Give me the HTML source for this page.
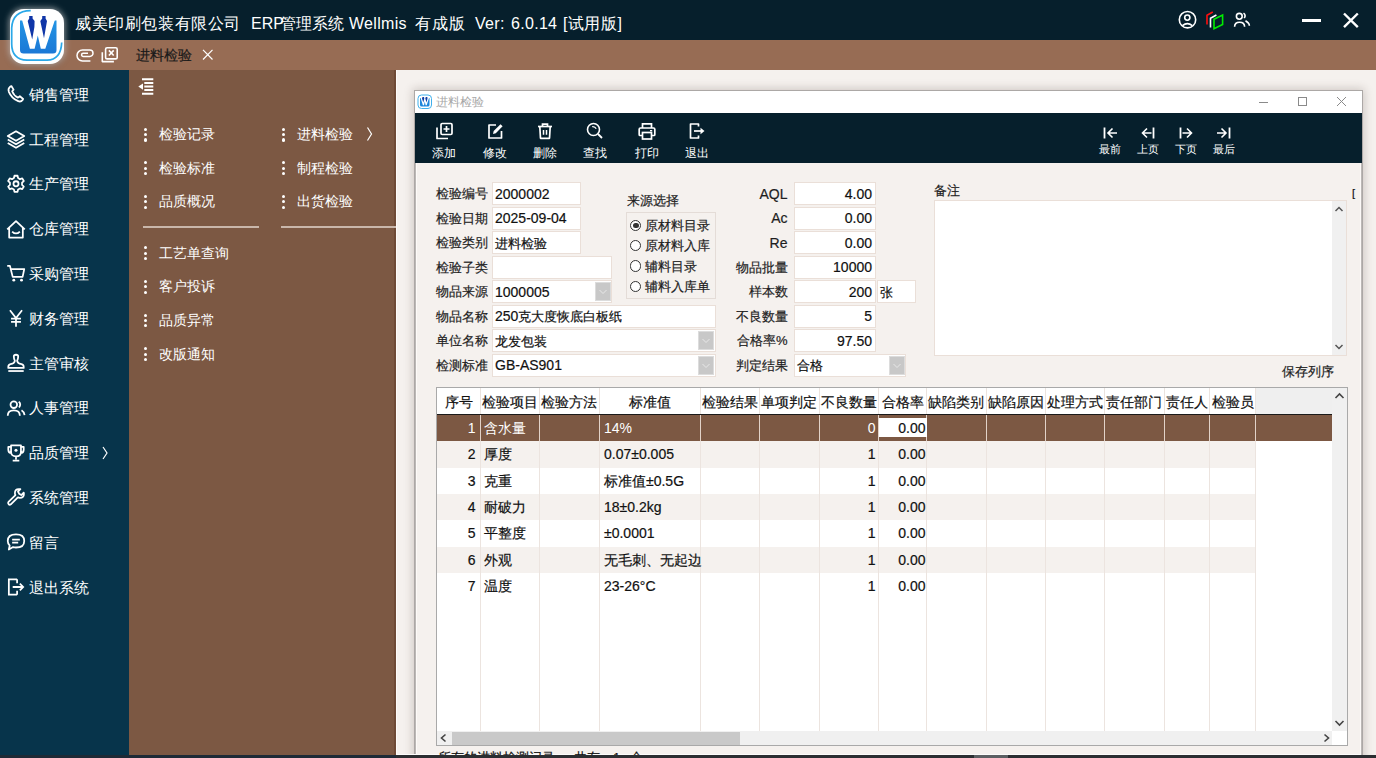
<!DOCTYPE html>
<html><head><meta charset="utf-8">
<style>
*{box-sizing:border-box;margin:0;padding:0}
html,body{width:1376px;height:758px;overflow:hidden;background:#f5f1ee;font-family:"Liberation Sans",sans-serif;position:relative}
.a{position:absolute}
.t{position:absolute;white-space:nowrap}
.d{-webkit-text-stroke:0.2px currentColor}
svg{position:absolute;overflow:visible}
</style></head><body>

<div class="a" style="left:0px;top:0px;width:1376px;height:40px;background:#061f2c"></div>
<div class="a" style="left:0px;top:40px;width:1376px;height:30px;background:#976c54"></div>
<div class="t" style="left:75px;top:13.30px;height:22px;line-height:22px;font-size:16px;color:#ffffff;letter-spacing:0.6px">威美印刷包装有限公司</div>
<div class="t" style="left:251px;top:13.30px;height:22px;line-height:22px;font-size:16px;color:#ffffff;letter-spacing:0px">ERP</div>
<div class="t" style="left:280px;top:13.30px;height:22px;line-height:22px;font-size:16px;color:#ffffff;letter-spacing:0px">管理系统</div>
<div class="t" style="left:349px;top:13.30px;height:22px;line-height:22px;font-size:16px;color:#ffffff;letter-spacing:0.3px">Wellmis</div>
<div class="t" style="left:415px;top:13.30px;height:22px;line-height:22px;font-size:16px;color:#ffffff;letter-spacing:0.75px">有成版</div>
<div class="t" style="left:475px;top:13.30px;height:22px;line-height:22px;font-size:16px;color:#ffffff;letter-spacing:0.3px">Ver:</div>
<div class="t" style="left:511px;top:13.30px;height:22px;line-height:22px;font-size:16px;color:#ffffff;letter-spacing:0.3px">6.0.14</div>
<div class="t" style="left:563px;top:13.30px;height:22px;line-height:22px;font-size:16px;color:#ffffff;letter-spacing:0.5px">[试用版]</div>
<svg style="left:1176px;top:8px;" width="24" height="24" viewBox="0 0 24 24"><circle cx="11.5" cy="11.7" r="8.2" fill="none" stroke="#fff" stroke-width="1.6"/><circle cx="11.3" cy="9.6" r="2.6" fill="none" stroke="#fff" stroke-width="1.6"/><path d="M6.5 17.6 Q11.3 13.6 16.3 17.6" fill="none" stroke="#fff" stroke-width="1.6"/></svg>
<svg style="left:1204px;top:8px;" width="24" height="24" viewBox="0 0 24 24"><path d="M3 16.5 V7.3 L8.8 4" fill="none" stroke="#ff1010" stroke-width="1.6"/><path d="M6.5 19.5 V10.2 L12.4 7" fill="none" stroke="#fff" stroke-width="1.6"/><path d="M10 20.6 V11.3 L18.6 7 V16.4 Z" fill="none" stroke="#00ee00" stroke-width="1.6"/></svg>
<svg style="left:1232px;top:8px;" width="24" height="24" viewBox="0 0 24 24"><circle cx="7.3" cy="8.3" r="2.9" fill="none" stroke="#fff" stroke-width="1.6"/><path d="M2.6 18.8 Q2.6 14.2 7.6 14.2 Q12.6 14.2 12.6 18.8" fill="none" stroke="#fff" stroke-width="1.6"/><path d="M11.5 5.2 Q14.2 7 12.3 10.2" fill="none" stroke="#fff" stroke-width="1.6"/><path d="M13.5 12.8 Q17.2 15 17.4 17.8" fill="none" stroke="#fff" stroke-width="1.6"/></svg>
<div class="a" style="left:1302px;top:19px;width:19px;height:2.5px;background:#fff"></div>
<svg style="left:1340px;top:10px;" width="22" height="22" viewBox="0 0 22 22"><path d="M4 3.5 L17.8 17.2 M17.8 3.5 L4 17.2" stroke="#fff" stroke-width="2.4"/></svg>
<svg style="left:74.8px;top:46.8px;" width="24" height="18" viewBox="0 0 24 18"><path d="M15.4 14 H7.5 A5.5 5.5 0 0 1 7.5 3 H14.8 A3.2 3.2 0 0 1 14.8 9.4 H8.2 A1.6 1.6 0 0 1 8.2 6.2 H13" fill="none" stroke="#fff" stroke-width="1.5"/></svg>
<svg style="left:100px;top:45px;" width="22" height="20" viewBox="0 0 22 20"><rect x="5.6" y="2.7" width="11.6" height="11.2" rx="1.5" fill="none" stroke="#fff" stroke-width="1.6"/><path d="M2.3 7.2 V16.6 H13.9" fill="none" stroke="#fff" stroke-width="1.6" stroke-linejoin="round"/><path d="M8.9 5.4 L13.7 10.5 M13.7 5.4 L8.9 10.5" stroke="#fff" stroke-width="1.6"/></svg>
<div class="t d" style="left:136px;top:44.60px;height:20px;line-height:20px;font-size:14px;color:#1a1a1a;">进料检验</div>
<svg style="left:201px;top:48px;" width="14" height="14" viewBox="0 0 14 14"><path d="M2 1.8 L11.5 11.5 M11.5 1.8 L2 11.5" stroke="#fff" stroke-width="1.2"/></svg>
<div class="a" style="left:10px;top:9px;width:54px;height:55px;border-radius:14px;background:#fff;box-shadow:0 0 6px 1px rgba(255,255,255,0.55),0 2px 6px rgba(0,0,0,0.35)"></div>
<svg style="left:0px;top:0px;" width="80" height="80" viewBox="0 0 80 80"><defs><linearGradient id="lg" x1="0" y1="0" x2="0" y2="1"><stop offset="0" stop-color="#2294e4"/><stop offset="1" stop-color="#1b78d6"/></linearGradient></defs>
<path d="M30.7 10.6 Q12.5 10.8 11.7 28 V44 Q11.8 59.6 27 60.2 H47 Q61 59.8 61.7 42.5" fill="none" stroke="#2aa8e8" stroke-width="1.7"/>
<path d="M20 20.4 H56.5 V50 Q56.5 53.5 53 53.5 H23.5 Q20 53.5 20 50 Z" fill="url(#lg)"/>
<polygon points="22,19.8 55,19.8 45.3,48.7 40.8,48.7 37.8,35.5 34.6,48.7 29.9,48.7" fill="#fff"/>
<polygon points="29.2,16 32.6,16 32.6,18.4 34.6,21 34.4,27 32.2,39.5 27.7,21 29.2,18.4" fill="#1036a8"/>
<polygon points="42.2,16 45.6,16 45.6,18.4 47,21 44,38.3 40.3,21 42.2,18.4" fill="#1036a8"/></svg>
<div class="a" style="left:0px;top:70px;width:129px;height:688px;background:#07344b"></div>
<div class="t" style="left:29px;top:83.80px;height:21px;line-height:21px;font-size:15px;color:#ffffff;">销售管理</div>
<svg style="left:7px;top:85px;" width="18" height="18" viewBox="0 0 18 18"><g transform="translate(9 9) scale(1.1) translate(-9 -9)"><path d="M3.5 2.5 Q1.5 4 2.5 7 Q5 13 11 15.5 Q13.5 16.5 15 14.5 L15.5 13.5 L12.5 11 L10.8 12.3 Q7 10.5 5.5 6.5 L6.8 5 L4.8 1.8 Z" fill="none" stroke="#fff" stroke-width="1.6" stroke-linejoin="round"/></g></svg>
<div class="t" style="left:29px;top:128.60px;height:21px;line-height:21px;font-size:15px;color:#ffffff;">工程管理</div>
<svg style="left:7px;top:130px;" width="18" height="18" viewBox="0 0 18 18"><g transform="translate(9 9) scale(1.1) translate(-9 -9)"><path d="M9 2 L16.5 6.3 L9 10.6 L1.5 6.3 Z" fill="none" stroke="#fff" stroke-width="1.6" stroke-linejoin="round"/><path d="M1.5 9.5 L9 13.8 L16.5 9.5 M1.5 12.7 L9 17 L16.5 12.7" fill="none" stroke="#fff" stroke-width="1.6" stroke-linejoin="round"/></g></svg>
<div class="t" style="left:29px;top:173.40px;height:21px;line-height:21px;font-size:15px;color:#ffffff;">生产管理</div>
<svg style="left:7px;top:175px;" width="18" height="18" viewBox="0 0 18 18"><g transform="translate(9 9) scale(1.1) translate(-9 -9)"><path d="M7.6 1.5 H10.4 L10.9 3.6 L12.6 4.6 L14.7 3.9 L16.1 6.3 L14.5 7.8 V9.8 L16.1 11.3 L14.7 13.7 L12.6 13 L10.9 14 L10.4 16.1 H7.6 L7.1 14 L5.4 13 L3.3 13.7 L1.9 11.3 L3.5 9.8 V7.8 L1.9 6.3 L3.3 3.9 L5.4 4.6 L7.1 3.6 Z" fill="none" stroke="#fff" stroke-width="1.6" stroke-linejoin="round"/><circle cx="9" cy="8.8" r="2.3" fill="none" stroke="#fff" stroke-width="1.6"/></g></svg>
<div class="t" style="left:29px;top:218.20px;height:21px;line-height:21px;font-size:15px;color:#ffffff;">仓库管理</div>
<svg style="left:7px;top:220px;" width="18" height="18" viewBox="0 0 18 18"><g transform="translate(9 9) scale(1.1) translate(-9 -9)"><path d="M1 9.3 L9 1.8 L17 9.3 M2.8 7.8 V16.8 H15.2 V7.8" fill="none" stroke="#fff" stroke-width="1.6" stroke-linejoin="round"/><path d="M5.5 11.3 Q9 14.8 12.5 11.3" fill="none" stroke="#fff" stroke-width="1.6"/></g></svg>
<div class="t" style="left:29px;top:263.00px;height:21px;line-height:21px;font-size:15px;color:#ffffff;">采购管理</div>
<svg style="left:7px;top:264px;" width="18" height="18" viewBox="0 0 18 18"><g transform="translate(9 9) scale(1.1) translate(-9 -9)"><path d="M1 2.5 H3.5 L6 12.5 H15 L16.5 5.5 H4.5" fill="none" stroke="#fff" stroke-width="1.6" stroke-linejoin="round"/><circle cx="7" cy="15.5" r="1.3" fill="#fff"/><circle cx="14" cy="15.5" r="1.3" fill="#fff"/></g></svg>
<div class="t" style="left:29px;top:307.80px;height:21px;line-height:21px;font-size:15px;color:#ffffff;">财务管理</div>
<svg style="left:7px;top:309px;" width="18" height="18" viewBox="0 0 18 18"><g transform="translate(9 9) scale(1.1) translate(-9 -9)"><path d="M3.5 2 L9 9 L14.5 2 M9 9 V17 M4.5 9.5 H13.5 M4.5 12.5 H13.5" fill="none" stroke="#fff" stroke-width="1.6"/></g></svg>
<div class="t" style="left:29px;top:352.60px;height:21px;line-height:21px;font-size:15px;color:#ffffff;">主管审核</div>
<svg style="left:7px;top:354px;" width="18" height="18" viewBox="0 0 18 18"><g transform="translate(9 9) scale(1.1) translate(-9 -9)"><path d="M7 3 Q7 1.5 9 1.5 Q11 1.5 11 3 Q11 5 10 7 Q10.5 9.5 14 10 Q16 10.5 16 12.5 V13.5 H2 V12.5 Q2 10.5 4 10 Q7.5 9.5 8 7 Q7 5 7 3 Z" fill="none" stroke="#fff" stroke-width="1.6" stroke-linejoin="round"/><path d="M2 16.3 H16" stroke="#fff" stroke-width="1.6"/></g></svg>
<div class="t" style="left:29px;top:397.40px;height:21px;line-height:21px;font-size:15px;color:#ffffff;">人事管理</div>
<svg style="left:7px;top:399px;" width="18" height="18" viewBox="0 0 18 18"><g transform="translate(9 9) scale(1.1) translate(-9 -9)"><circle cx="7" cy="6" r="3" fill="none" stroke="#fff" stroke-width="1.6"/><path d="M1.5 16 Q1.5 11.2 7 11.2 Q12.5 11.2 12.5 16" fill="none" stroke="#fff" stroke-width="1.6"/><path d="M11.5 3.2 Q14 5.5 11.8 8.5 M14 11 Q16.5 12.5 16.8 15.5" fill="none" stroke="#fff" stroke-width="1.6"/></g></svg>
<div class="t" style="left:29px;top:442.20px;height:21px;line-height:21px;font-size:15px;color:#ffffff;">品质管理</div>
<svg style="left:7px;top:444px;" width="18" height="18" viewBox="0 0 18 18"><g transform="translate(9 9) scale(1.1) translate(-9 -9)"><path d="M4.5 2 H13.5 V8 Q13.5 12 9 12 Q4.5 12 4.5 8 Z M4.5 3.5 H2 V6 Q2 9 5 9 M13.5 3.5 H16 V6 Q16 9 13 9 M9 12 V15 M6 16 H12" fill="none" stroke="#fff" stroke-width="1.6" stroke-linejoin="round"/><circle cx="9" cy="6.5" r="1.4" fill="#fff"/></g></svg>
<div class="t" style="left:29px;top:487.00px;height:21px;line-height:21px;font-size:15px;color:#ffffff;">系统管理</div>
<svg style="left:7px;top:488px;" width="18" height="18" viewBox="0 0 18 18"><g transform="translate(9 9) scale(1.1) translate(-9 -9)"><path d="M11.5 1.8 Q8 1.8 8 5.5 Q8 6.5 8.5 7.2 L2.2 13.5 Q1.3 14.5 2.3 15.6 Q3.3 16.5 4.3 15.6 L10.7 9.3 Q11.5 9.8 12.5 9.8 Q16.2 9.8 16.2 6.3 Q16.2 5.5 16 5 L13.8 7.2 L11.8 6 L10.8 4 L13 1.9 Q12.3 1.8 11.5 1.8 Z" fill="none" stroke="#fff" stroke-width="1.6" stroke-linejoin="round"/></g></svg>
<div class="t" style="left:29px;top:531.80px;height:21px;line-height:21px;font-size:15px;color:#ffffff;">留言</div>
<svg style="left:7px;top:533px;" width="18" height="18" viewBox="0 0 18 18"><g transform="translate(9 9) scale(1.1) translate(-9 -9)"><path d="M9 2 Q16.5 2 16.5 8 Q16.5 14 9 14 Q7.5 14 6.3 13.6 L2.5 15.8 L3.3 12.2 Q1.5 10.5 1.5 8 Q1.5 2 9 2 Z" fill="none" stroke="#fff" stroke-width="1.6" stroke-linejoin="round"/><path d="M5.5 6.8 H12.5 M5.5 9.5 H11" stroke="#fff" stroke-width="1.6"/></g></svg>
<div class="t" style="left:29px;top:576.60px;height:21px;line-height:21px;font-size:15px;color:#ffffff;">退出系统</div>
<svg style="left:7px;top:578px;" width="18" height="18" viewBox="0 0 18 18"><g transform="translate(9 9) scale(1.1) translate(-9 -9)"><path d="M10 2 H2.5 V16 H10" fill="none" stroke="#fff" stroke-width="1.6"/><path d="M10 2 V5.5 M10 12.5 V16 M6 9 H15.5 M12.5 6 L15.5 9 L12.5 12" fill="none" stroke="#fff" stroke-width="1.6"/></g></svg>
<svg style="left:100px;top:444.7px;" width="10" height="16" viewBox="0 0 10 16"><path d="M3 2 L7 8 L3 14" fill="none" stroke="#fff" stroke-width="1.2"/></svg>
<div class="a" style="left:129px;top:70px;width:267px;height:688px;background:#7c5843"></div>
<div class="a" style="left:394px;top:70px;width:1.5px;height:688px;background:#6e4a36"></div>
<div class="a" style="left:395.5px;top:70px;width:1.5px;height:688px;background:#fdfbfa"></div>
<svg style="left:136px;top:76.7px;" width="20" height="20" viewBox="0 0 20 20"><path d="M6 2.3 H17.3 M8.3 6 H17.3 M8.3 9.5 H17.3 M8.3 13 H17.3 M6 16.8 H17.3" stroke="#fff" stroke-width="2"/><path d="M7 6.5 L2.3 9.6 L7 12.7 Z" fill="#fff"/></svg>
<div class="a" style="left:143.9px;top:127.6px;width:3.2px;height:3.2px;border-radius:50%;background:#fff"></div><div class="a" style="left:143.9px;top:133.0px;width:3.2px;height:3.2px;border-radius:50%;background:#fff"></div><div class="a" style="left:143.9px;top:138.4px;width:3.2px;height:3.2px;border-radius:50%;background:#fff"></div>
<div class="t" style="left:159px;top:123.90px;height:20px;line-height:20px;font-size:14px;color:#ffffff;">检验记录</div>
<div class="a" style="left:143.9px;top:161.2px;width:3.2px;height:3.2px;border-radius:50%;background:#fff"></div><div class="a" style="left:143.9px;top:166.6px;width:3.2px;height:3.2px;border-radius:50%;background:#fff"></div><div class="a" style="left:143.9px;top:172.0px;width:3.2px;height:3.2px;border-radius:50%;background:#fff"></div>
<div class="t" style="left:159px;top:157.50px;height:20px;line-height:20px;font-size:14px;color:#ffffff;">检验标准</div>
<div class="a" style="left:143.9px;top:194.7px;width:3.2px;height:3.2px;border-radius:50%;background:#fff"></div><div class="a" style="left:143.9px;top:200.1px;width:3.2px;height:3.2px;border-radius:50%;background:#fff"></div><div class="a" style="left:143.9px;top:205.5px;width:3.2px;height:3.2px;border-radius:50%;background:#fff"></div>
<div class="t" style="left:159px;top:191.00px;height:20px;line-height:20px;font-size:14px;color:#ffffff;">品质概况</div>
<div class="a" style="left:143.9px;top:246.2px;width:3.2px;height:3.2px;border-radius:50%;background:#fff"></div><div class="a" style="left:143.9px;top:251.6px;width:3.2px;height:3.2px;border-radius:50%;background:#fff"></div><div class="a" style="left:143.9px;top:257.0px;width:3.2px;height:3.2px;border-radius:50%;background:#fff"></div>
<div class="t" style="left:159px;top:242.50px;height:20px;line-height:20px;font-size:14px;color:#ffffff;">工艺单查询</div>
<div class="a" style="left:143.9px;top:279.9px;width:3.2px;height:3.2px;border-radius:50%;background:#fff"></div><div class="a" style="left:143.9px;top:285.3px;width:3.2px;height:3.2px;border-radius:50%;background:#fff"></div><div class="a" style="left:143.9px;top:290.7px;width:3.2px;height:3.2px;border-radius:50%;background:#fff"></div>
<div class="t" style="left:159px;top:276.20px;height:20px;line-height:20px;font-size:14px;color:#ffffff;">客户投诉</div>
<div class="a" style="left:143.9px;top:313.5px;width:3.2px;height:3.2px;border-radius:50%;background:#fff"></div><div class="a" style="left:143.9px;top:318.9px;width:3.2px;height:3.2px;border-radius:50%;background:#fff"></div><div class="a" style="left:143.9px;top:324.3px;width:3.2px;height:3.2px;border-radius:50%;background:#fff"></div>
<div class="t" style="left:159px;top:309.80px;height:20px;line-height:20px;font-size:14px;color:#ffffff;">品质异常</div>
<div class="a" style="left:143.9px;top:347.2px;width:3.2px;height:3.2px;border-radius:50%;background:#fff"></div><div class="a" style="left:143.9px;top:352.6px;width:3.2px;height:3.2px;border-radius:50%;background:#fff"></div><div class="a" style="left:143.9px;top:358.0px;width:3.2px;height:3.2px;border-radius:50%;background:#fff"></div>
<div class="t" style="left:159px;top:343.50px;height:20px;line-height:20px;font-size:14px;color:#ffffff;">改版通知</div>
<div class="a" style="left:282.2px;top:127.6px;width:3.2px;height:3.2px;border-radius:50%;background:#fff"></div><div class="a" style="left:282.2px;top:133.0px;width:3.2px;height:3.2px;border-radius:50%;background:#fff"></div><div class="a" style="left:282.2px;top:138.4px;width:3.2px;height:3.2px;border-radius:50%;background:#fff"></div>
<div class="t" style="left:297.3px;top:123.90px;height:20px;line-height:20px;font-size:14px;color:#ffffff;">进料检验</div>
<div class="a" style="left:282.2px;top:161.2px;width:3.2px;height:3.2px;border-radius:50%;background:#fff"></div><div class="a" style="left:282.2px;top:166.6px;width:3.2px;height:3.2px;border-radius:50%;background:#fff"></div><div class="a" style="left:282.2px;top:172.0px;width:3.2px;height:3.2px;border-radius:50%;background:#fff"></div>
<div class="t" style="left:297.3px;top:157.50px;height:20px;line-height:20px;font-size:14px;color:#ffffff;">制程检验</div>
<div class="a" style="left:282.2px;top:194.7px;width:3.2px;height:3.2px;border-radius:50%;background:#fff"></div><div class="a" style="left:282.2px;top:200.1px;width:3.2px;height:3.2px;border-radius:50%;background:#fff"></div><div class="a" style="left:282.2px;top:205.5px;width:3.2px;height:3.2px;border-radius:50%;background:#fff"></div>
<div class="t" style="left:297.3px;top:191.00px;height:20px;line-height:20px;font-size:14px;color:#ffffff;">出货检验</div>
<svg style="left:364px;top:125px;" width="10" height="18" viewBox="0 0 10 18"><path d="M3.5 2.5 L7.5 9 L3.5 15.5" fill="none" stroke="#fff" stroke-width="1.2"/></svg>
<div class="a" style="left:143px;top:226px;width:116px;height:2px;background:#c9b6aa"></div>
<div class="a" style="left:281px;top:226px;width:115px;height:2px;background:#c9b6aa"></div>
<div class="a" style="left:414px;top:90px;width:949px;height:680px;background:#f5f1ee;border:1px solid #aca8a6;box-shadow:inset 1px 0 0 #bcb8b6,inset 2px 0 0 #fdfaf8,inset -1px 0 0 #bcb8b6,inset -2px 0 0 #fdfaf8,0 0 9px 1px rgba(60,40,30,0.22)"></div>
<div class="a" style="left:415px;top:91px;width:947px;height:22px;background:#fff"></div>
<svg style="left:417px;top:94px;" width="16" height="16" viewBox="0 0 16 16"><rect x="1" y="1" width="13.5" height="13.5" rx="3.5" fill="#fff" stroke="#3fb0ec" stroke-width="1"/><path d="M3 4 H12.5 V11 Q12.5 12.5 11 12.5 H4.5 Q3 12.5 3 11 Z" fill="#1d87dc"/><polygon points="3.6,4 12,4 9.7,11.3 8.6,11.3 7.8,7.5 7,11.3 5.9,11.3" fill="#fff"/><path d="M5.5 3 L7 3 L7.3 4.5 L6.3 8.5 L5 4.5 Z M8.8 3 L10.3 3 L10.5 4.5 L9.5 8.5 L8.3 4.5 Z" fill="#0e3ea6"/></svg>
<div class="t" style="left:436px;top:92.50px;height:18px;line-height:18px;font-size:12px;color:#a6a6a6;">进料检验</div>
<div class="a" style="left:1259px;top:102px;width:9px;height:1px;background:#8a8a8a"></div>
<div class="a" style="left:1298px;top:97px;width:9px;height:9px;border:1px solid #8a8a8a"></div>
<svg style="left:1336px;top:96px;" width="12" height="12" viewBox="0 0 12 12"><path d="M1 1 L10 10 M10 1 L1 10" stroke="#8a8a8a" stroke-width="1"/></svg>
<div class="a" style="left:415px;top:113px;width:947px;height:50px;background:#061f2c"></div>
<svg style="left:435px;top:122px;" width="18" height="18" viewBox="0 0 18 18"><rect x="6" y="1.5" width="11" height="11" rx="1.2" fill="none" stroke="#fff" stroke-width="1.7"/><path d="M11.5 4 V10 M8.5 7 H14.5" stroke="#fff" stroke-width="1.7"/><path d="M2 5.5 V16.5 H13" fill="none" stroke="#fff" stroke-width="1.7" stroke-linejoin="round"/></svg>
<div class="t" style="left:383.8px;top:143.50px;width:120px;height:18px;line-height:18px;font-size:12px;color:#fff;text-align:center;">添加</div>
<svg style="left:486px;top:122px;" width="18" height="18" viewBox="0 0 18 18"><path d="M10 3 H3 V16 H15.5 V9" fill="none" stroke="#fff" stroke-width="1.7" stroke-linejoin="round"/><path d="M7 12 L7.7 9 L14.5 2.2 L16.6 4.3 L9.8 11.2 Z" fill="#fff"/></svg>
<div class="t" style="left:435.0px;top:143.50px;width:120px;height:18px;line-height:18px;font-size:12px;color:#fff;text-align:center;">修改</div>
<svg style="left:536px;top:122px;" width="18" height="18" viewBox="0 0 18 18"><path d="M2 4.5 H16" stroke="#fff" stroke-width="1.7"/><path d="M6.5 4.5 V2.2 H11.5 V4.5" fill="none" stroke="#fff" stroke-width="1.7"/><path d="M3.8 4.5 L4.5 16.3 H13.5 L14.2 4.5" fill="none" stroke="#fff" stroke-width="1.7" stroke-linejoin="round"/><path d="M7.5 8 V12.8 M10.5 8 V12.8" stroke="#fff" stroke-width="1.5"/></svg>
<div class="t" style="left:485.0px;top:143.50px;width:120px;height:18px;line-height:18px;font-size:12px;color:#fff;text-align:center;">删除</div>
<svg style="left:586px;top:122px;" width="18" height="18" viewBox="0 0 18 18"><circle cx="7.5" cy="7.5" r="6" fill="none" stroke="#fff" stroke-width="1.6"/><path d="M12 12 L16 16" stroke="#fff" stroke-width="1.8"/><path d="M6.2 4.6 Q9 4.2 10.2 6.8" fill="none" stroke="#fff" stroke-width="1.2"/></svg>
<div class="t" style="left:535.3px;top:143.50px;width:120px;height:18px;line-height:18px;font-size:12px;color:#fff;text-align:center;">查找</div>
<svg style="left:638px;top:122px;" width="18" height="18" viewBox="0 0 18 18"><path d="M4.5 6 V1.8 H13.5 V6" fill="none" stroke="#fff" stroke-width="1.7"/><path d="M4 13.5 H2 Q1.2 13.5 1.2 12.5 V7.3 Q1.2 6 2.5 6 H15.5 Q16.8 6 16.8 7.3 V12.5 Q16.8 13.5 16 13.5 H14" fill="none" stroke="#fff" stroke-width="1.7"/><rect x="4.5" y="10.5" width="9" height="6.5" fill="none" stroke="#fff" stroke-width="1.7"/><rect x="12" y="8" width="2.2" height="1.3" fill="#fff"/></svg>
<div class="t" style="left:586.8px;top:143.50px;width:120px;height:18px;line-height:18px;font-size:12px;color:#fff;text-align:center;">打印</div>
<svg style="left:688px;top:122px;" width="18" height="18" viewBox="0 0 18 18"><path d="M10.5 4.5 V2 H2.5 V16 H10.5 V13.5" fill="none" stroke="#fff" stroke-width="1.7" stroke-linejoin="round"/><path d="M6 9 H15" stroke="#fff" stroke-width="1.7"/><path d="M12.5 5.8 L16.5 9 L12.5 12.2 Z" fill="#fff"/></svg>
<div class="t" style="left:637.3px;top:143.50px;width:120px;height:18px;line-height:18px;font-size:12px;color:#fff;text-align:center;">退出</div>
<svg style="left:1103px;top:126.5px;" width="14" height="12" viewBox="0 0 14 12"><path d="M1.5 0.5 V11.5" stroke="#fff" stroke-width="1.8"/><path d="M14 6 H5 M9.5 1.5 L5 6 L9.5 10.5" fill="none" stroke="#fff" stroke-width="1.6"/></svg>
<div class="t" style="left:1050.0px;top:140.50px;width:120px;height:17px;line-height:17px;font-size:11px;color:#fff;text-align:center;">最前</div>
<svg style="left:1141px;top:126.5px;" width="14" height="12" viewBox="0 0 14 12"><path d="M12.5 0.5 V11.5" stroke="#fff" stroke-width="1.8"/><path d="M10.5 6 H1.5 M6 1.5 L1.5 6 L6 10.5" fill="none" stroke="#fff" stroke-width="1.6"/></svg>
<div class="t" style="left:1088.0px;top:140.50px;width:120px;height:17px;line-height:17px;font-size:11px;color:#fff;text-align:center;">上页</div>
<svg style="left:1179px;top:126.5px;" width="14" height="12" viewBox="0 0 14 12"><path d="M1.5 0.5 V11.5" stroke="#fff" stroke-width="1.8"/><path d="M3.5 6 H12.5 M8 1.5 L12.5 6 L8 10.5" fill="none" stroke="#fff" stroke-width="1.6"/></svg>
<div class="t" style="left:1126.0px;top:140.50px;width:120px;height:17px;line-height:17px;font-size:11px;color:#fff;text-align:center;">下页</div>
<svg style="left:1217px;top:126.5px;" width="14" height="12" viewBox="0 0 14 12"><path d="M12.5 0.5 V11.5" stroke="#fff" stroke-width="1.8"/><path d="M0 6 H9 M4.5 1.5 L9 6 L4.5 10.5" fill="none" stroke="#fff" stroke-width="1.6"/></svg>
<div class="t" style="left:1164.0px;top:140.50px;width:120px;height:17px;line-height:17px;font-size:11px;color:#fff;text-align:center;">最后</div>
<div class="t d" style="left:436px;top:184.00px;height:19px;line-height:19px;font-size:13px;color:#1e1e1e;">检验编号</div>
<div class="t d" style="left:436px;top:208.50px;height:19px;line-height:19px;font-size:13px;color:#1e1e1e;">检验日期</div>
<div class="t d" style="left:436px;top:233.00px;height:19px;line-height:19px;font-size:13px;color:#1e1e1e;">检验类别</div>
<div class="t d" style="left:436px;top:257.50px;height:19px;line-height:19px;font-size:13px;color:#1e1e1e;">检验子类</div>
<div class="t d" style="left:436px;top:282.00px;height:19px;line-height:19px;font-size:13px;color:#1e1e1e;">物品来源</div>
<div class="t d" style="left:436px;top:306.50px;height:19px;line-height:19px;font-size:13px;color:#1e1e1e;">物品名称</div>
<div class="t d" style="left:436px;top:331.00px;height:19px;line-height:19px;font-size:13px;color:#1e1e1e;">单位名称</div>
<div class="t d" style="left:436px;top:355.50px;height:19px;line-height:19px;font-size:13px;color:#1e1e1e;">检测标准</div>
<div class="a" style="left:492px;top:182px;width:89px;height:23px;background:#fff;border:1px solid #eadfd8"></div>
<div class="t d" style="left:495px;top:183.50px;height:20px;line-height:20px;font-size:14px;color:#111;">2000002</div>
<div class="a" style="left:492px;top:206.5px;width:89px;height:23px;background:#fff;border:1px solid #eadfd8"></div>
<div class="t d" style="left:495px;top:208.00px;height:20px;line-height:20px;font-size:14px;color:#111;">2025-09-04</div>
<div class="a" style="left:492px;top:231px;width:89px;height:23px;background:#fff;border:1px solid #eadfd8"></div>
<div class="t d" style="left:495px;top:232.50px;height:20px;line-height:20px;font-size:14px;color:#111;"><span style="font-size:13px">进料检验</span></div>
<div class="a" style="left:492px;top:255.5px;width:120px;height:23px;background:#fff;border:1px solid #eadfd8"></div>
<div class="a" style="left:492px;top:280px;width:120px;height:23px;background:#fff;border:1px solid #eadfd8"></div>
<div class="t d" style="left:495px;top:281.50px;height:20px;line-height:20px;font-size:14px;color:#111;">1000005</div>
<div class="a" style="left:595px;top:282px;width:16px;height:19px;background:#c8c8c8;border:1px solid #dcdcdc"></div>
<svg style="left:598px;top:288px;" width="10" height="8" viewBox="0 0 10 8"><path d="M1.5 2 L5 5.5 L8.5 2" fill="none" stroke="#e8e8e8" stroke-width="1"/></svg>
<div class="a" style="left:492px;top:304.5px;width:224px;height:23px;background:#fff;border:1px solid #eadfd8"></div>
<div class="t d" style="left:495px;top:306.00px;height:20px;line-height:20px;font-size:14px;color:#111;">250<span style="font-size:13px">克大度恢底白板纸</span></div>
<div class="a" style="left:492px;top:329px;width:224px;height:23px;background:#fff;border:1px solid #eadfd8"></div>
<div class="t d" style="left:495px;top:330.50px;height:20px;line-height:20px;font-size:14px;color:#111;"><span style="font-size:13px">龙发包装</span></div>
<div class="a" style="left:698px;top:331px;width:16px;height:19px;background:#c8c8c8;border:1px solid #dcdcdc"></div>
<svg style="left:701px;top:337px;" width="10" height="8" viewBox="0 0 10 8"><path d="M1.5 2 L5 5.5 L8.5 2" fill="none" stroke="#e8e8e8" stroke-width="1"/></svg>
<div class="a" style="left:492px;top:353.5px;width:224px;height:23px;background:#fff;border:1px solid #eadfd8"></div>
<div class="t d" style="left:495px;top:355.00px;height:20px;line-height:20px;font-size:14px;color:#111;">GB-AS901</div>
<div class="a" style="left:698px;top:355.5px;width:16px;height:19px;background:#c8c8c8;border:1px solid #dcdcdc"></div>
<svg style="left:701px;top:361.5px;" width="10" height="8" viewBox="0 0 10 8"><path d="M1.5 2 L5 5.5 L8.5 2" fill="none" stroke="#e8e8e8" stroke-width="1"/></svg>
<div class="t d" style="left:627px;top:190.50px;height:19px;line-height:19px;font-size:13px;color:#1e1e1e;">来源选择</div>
<div class="a" style="left:626px;top:212px;width:90px;height:87px;border:1px solid #e4dcd7"></div>
<div class="a" style="left:630px;top:219.7px;width:11.4px;height:11.4px;border-radius:50%;background:#fff;border:1px solid #333"></div>
<div class="a" style="left:633px;top:222.6px;width:5.6px;height:5.6px;border-radius:50%;background:#333"></div>
<div class="t d" style="left:645px;top:215.90px;height:19px;line-height:19px;font-size:13px;color:#1e1e1e;">原材料目录</div>
<div class="a" style="left:630px;top:240.0px;width:11.4px;height:11.4px;border-radius:50%;background:#fff;border:1px solid #333"></div>
<div class="t d" style="left:645px;top:236.20px;height:19px;line-height:19px;font-size:13px;color:#1e1e1e;">原材料入库</div>
<div class="a" style="left:630px;top:260.3px;width:11.4px;height:11.4px;border-radius:50%;background:#fff;border:1px solid #333"></div>
<div class="t d" style="left:645px;top:256.50px;height:19px;line-height:19px;font-size:13px;color:#1e1e1e;">辅料目录</div>
<div class="a" style="left:630px;top:280.6px;width:11.4px;height:11.4px;border-radius:50%;background:#fff;border:1px solid #333"></div>
<div class="t d" style="left:645px;top:276.80px;height:19px;line-height:19px;font-size:13px;color:#1e1e1e;">辅料入库单</div>
<div class="t d" style="right:588.5px;top:183.50px;height:20px;line-height:20px;font-size:14px;color:#1e1e1e;text-align:right;">AQL</div>
<div class="a" style="left:794px;top:182px;width:82px;height:23px;background:#fff;border:1px solid #eadfd8"></div>
<div class="t d" style="right:504px;top:183.50px;height:20px;line-height:20px;font-size:14px;color:#111;text-align:right;">4.00</div>
<div class="t d" style="right:588.5px;top:208.00px;height:20px;line-height:20px;font-size:14px;color:#1e1e1e;text-align:right;">Ac</div>
<div class="a" style="left:794px;top:206.5px;width:82px;height:23px;background:#fff;border:1px solid #eadfd8"></div>
<div class="t d" style="right:504px;top:208.00px;height:20px;line-height:20px;font-size:14px;color:#111;text-align:right;">0.00</div>
<div class="t d" style="right:588.5px;top:232.50px;height:20px;line-height:20px;font-size:14px;color:#1e1e1e;text-align:right;">Re</div>
<div class="a" style="left:794px;top:231px;width:82px;height:23px;background:#fff;border:1px solid #eadfd8"></div>
<div class="t d" style="right:504px;top:232.50px;height:20px;line-height:20px;font-size:14px;color:#111;text-align:right;">0.00</div>
<div class="t d" style="right:588.5px;top:257.50px;height:19px;line-height:19px;font-size:13px;color:#1e1e1e;text-align:right;">物品批量</div>
<div class="a" style="left:794px;top:255.5px;width:82px;height:23px;background:#fff;border:1px solid #eadfd8"></div>
<div class="t d" style="right:504px;top:257.00px;height:20px;line-height:20px;font-size:14px;color:#111;text-align:right;">10000</div>
<div class="t d" style="right:588.5px;top:282.00px;height:19px;line-height:19px;font-size:13px;color:#1e1e1e;text-align:right;">样本数</div>
<div class="a" style="left:794px;top:280px;width:82px;height:23px;background:#fff;border:1px solid #eadfd8"></div>
<div class="t d" style="right:504px;top:281.50px;height:20px;line-height:20px;font-size:14px;color:#111;text-align:right;">200</div>
<div class="t d" style="right:588.5px;top:306.50px;height:19px;line-height:19px;font-size:13px;color:#1e1e1e;text-align:right;">不良数量</div>
<div class="a" style="left:794px;top:304.5px;width:82px;height:23px;background:#fff;border:1px solid #eadfd8"></div>
<div class="t d" style="right:504px;top:306.00px;height:20px;line-height:20px;font-size:14px;color:#111;text-align:right;">5</div>
<div class="t d" style="right:588.5px;top:331.00px;height:19px;line-height:19px;font-size:13px;color:#1e1e1e;text-align:right;">合格率%</div>
<div class="a" style="left:794px;top:329px;width:82px;height:23px;background:#fff;border:1px solid #eadfd8"></div>
<div class="t d" style="right:504px;top:330.50px;height:20px;line-height:20px;font-size:14px;color:#111;text-align:right;">97.50</div>
<div class="t d" style="right:588.5px;top:355.50px;height:19px;line-height:19px;font-size:13px;color:#1e1e1e;text-align:right;">判定结果</div>
<div class="a" style="left:877px;top:280px;width:39px;height:23px;background:#fff;border:1px solid #eadfd8"></div>
<div class="t d" style="left:880px;top:281.50px;height:20px;line-height:20px;font-size:14px;color:#111;"><span style="font-size:13px">张</span></div>
<div class="a" style="left:794px;top:353.5px;width:112px;height:23px;background:#fff;border:1px solid #eadfd8"></div>
<div class="t d" style="left:797px;top:355.00px;height:20px;line-height:20px;font-size:14px;color:#111;"><span style="font-size:13px">合格</span></div>
<div class="a" style="left:889px;top:355.5px;width:16px;height:19px;background:#c8c8c8;border:1px solid #dcdcdc"></div>
<svg style="left:892px;top:361.5px;" width="10" height="8" viewBox="0 0 10 8"><path d="M1.5 2 L5 5.5 L8.5 2" fill="none" stroke="#e8e8e8" stroke-width="1"/></svg>
<div class="t d" style="left:934px;top:181.00px;height:19px;line-height:19px;font-size:13px;color:#1e1e1e;">备注</div>
<div class="a" style="left:934px;top:200px;width:413px;height:156px;background:#fff;border:1px solid #eadfd8"></div>
<div class="a" style="left:1332px;top:201px;width:14px;height:154px;background:#f0f0f0"></div>
<svg style="left:1333px;top:203px;" width="12" height="12" viewBox="0 0 12 12"><path d="M2.5 8 L6 4.5 L9.5 8" fill="none" stroke="#555" stroke-width="1.5"/></svg>
<svg style="left:1333px;top:341px;" width="12" height="12" viewBox="0 0 12 12"><path d="M2.5 4 L6 7.5 L9.5 4" fill="none" stroke="#555" stroke-width="1.5"/></svg>
<div class="t d" style="left:1352px;top:184.50px;height:17px;line-height:17px;font-size:11px;color:#111;">[</div>
<div class="t d" style="left:1282px;top:362.20px;height:19px;line-height:19px;font-size:13px;color:#1e1e1e;">保存列序</div>
<div class="a" style="left:436px;top:387px;width:912px;height:359px;background:#fff;border:1px solid #a9a9a9"></div>
<div class="a" style="left:1255.5px;top:388px;width:76.5px;height:25.5px;background:#efefef"></div>
<div class="t d" style="left:398.75px;top:392.30px;width:120px;height:20px;line-height:20px;font-size:14px;color:#111;text-align:center;">序号</div>
<div class="t d" style="left:450.0px;top:392.30px;width:120px;height:20px;line-height:20px;font-size:14px;color:#111;text-align:center;">检验项目</div>
<div class="t d" style="left:509.25px;top:392.30px;width:120px;height:20px;line-height:20px;font-size:14px;color:#111;text-align:center;">检验方法</div>
<div class="t d" style="left:589.5px;top:392.30px;width:120px;height:20px;line-height:20px;font-size:14px;color:#111;text-align:center;">标准值</div>
<div class="t d" style="left:669.5px;top:392.30px;width:120px;height:20px;line-height:20px;font-size:14px;color:#111;text-align:center;">检验结果</div>
<div class="t d" style="left:729.25px;top:392.30px;width:120px;height:20px;line-height:20px;font-size:14px;color:#111;text-align:center;">单项判定</div>
<div class="t d" style="left:789.0px;top:392.30px;width:120px;height:20px;line-height:20px;font-size:14px;color:#111;text-align:center;">不良数量</div>
<div class="t d" style="left:842.5px;top:392.30px;width:120px;height:20px;line-height:20px;font-size:14px;color:#111;text-align:center;">合格率</div>
<div class="t d" style="left:896.25px;top:392.30px;width:120px;height:20px;line-height:20px;font-size:14px;color:#111;text-align:center;">缺陷类别</div>
<div class="t d" style="left:955.75px;top:392.30px;width:120px;height:20px;line-height:20px;font-size:14px;color:#111;text-align:center;">缺陷原因</div>
<div class="t d" style="left:1015.0px;top:392.30px;width:120px;height:20px;line-height:20px;font-size:14px;color:#111;text-align:center;">处理方式</div>
<div class="t d" style="left:1074.25px;top:392.30px;width:120px;height:20px;line-height:20px;font-size:14px;color:#111;text-align:center;">责任部门</div>
<div class="t d" style="left:1126.75px;top:392.30px;width:120px;height:20px;line-height:20px;font-size:14px;color:#111;text-align:center;">责任人</div>
<div class="t d" style="left:1172.5px;top:392.30px;width:120px;height:20px;line-height:20px;font-size:14px;color:#111;text-align:center;">检验员</div>
<div class="a" style="left:480.0px;top:388px;width:1px;height:25.5px;background:#ebe3de"></div>
<div class="a" style="left:539.0px;top:388px;width:1px;height:25.5px;background:#ebe3de"></div>
<div class="a" style="left:598.5px;top:388px;width:1px;height:25.5px;background:#ebe3de"></div>
<div class="a" style="left:699.5px;top:388px;width:1px;height:25.5px;background:#ebe3de"></div>
<div class="a" style="left:758.5px;top:388px;width:1px;height:25.5px;background:#ebe3de"></div>
<div class="a" style="left:819.0px;top:388px;width:1px;height:25.5px;background:#ebe3de"></div>
<div class="a" style="left:878.0px;top:388px;width:1px;height:25.5px;background:#ebe3de"></div>
<div class="a" style="left:926.0px;top:388px;width:1px;height:25.5px;background:#ebe3de"></div>
<div class="a" style="left:985.5px;top:388px;width:1px;height:25.5px;background:#ebe3de"></div>
<div class="a" style="left:1045.0px;top:388px;width:1px;height:25.5px;background:#ebe3de"></div>
<div class="a" style="left:1104.0px;top:388px;width:1px;height:25.5px;background:#ebe3de"></div>
<div class="a" style="left:1163.5px;top:388px;width:1px;height:25.5px;background:#ebe3de"></div>
<div class="a" style="left:1209.0px;top:388px;width:1px;height:25.5px;background:#ebe3de"></div>
<div class="a" style="left:1255.0px;top:388px;width:1px;height:25.5px;background:#ebe3de"></div>
<div class="a" style="left:437px;top:413.5px;width:895px;height:1.5px;background:#1a1a1a"></div>
<div class="a" style="left:437px;top:415.0px;width:895px;height:26.3px;background:#7c5843"></div>
<div class="a" style="left:437px;top:441.3px;width:818.5px;height:26.3px;background:#f5f1ee"></div>
<div class="a" style="left:437px;top:493.9px;width:818.5px;height:26.3px;background:#f5f1ee"></div>
<div class="a" style="left:437px;top:546.5px;width:818.5px;height:26.3px;background:#f5f1ee"></div>
<div class="a" style="left:480.0px;top:415px;width:1px;height:316px;background:#ece4df"></div>
<div class="a" style="left:539.0px;top:415px;width:1px;height:316px;background:#ece4df"></div>
<div class="a" style="left:598.5px;top:415px;width:1px;height:316px;background:#ece4df"></div>
<div class="a" style="left:699.5px;top:415px;width:1px;height:316px;background:#ece4df"></div>
<div class="a" style="left:758.5px;top:415px;width:1px;height:316px;background:#ece4df"></div>
<div class="a" style="left:819.0px;top:415px;width:1px;height:316px;background:#ece4df"></div>
<div class="a" style="left:878.0px;top:415px;width:1px;height:316px;background:#ece4df"></div>
<div class="a" style="left:926.0px;top:415px;width:1px;height:316px;background:#ece4df"></div>
<div class="a" style="left:985.5px;top:415px;width:1px;height:316px;background:#ece4df"></div>
<div class="a" style="left:1045.0px;top:415px;width:1px;height:316px;background:#ece4df"></div>
<div class="a" style="left:1104.0px;top:415px;width:1px;height:316px;background:#ece4df"></div>
<div class="a" style="left:1163.5px;top:415px;width:1px;height:316px;background:#ece4df"></div>
<div class="a" style="left:1209.0px;top:415px;width:1px;height:316px;background:#ece4df"></div>
<div class="a" style="left:1255.0px;top:415px;width:1px;height:316px;background:#ece4df"></div>
<div class="a" style="left:480.0px;top:415px;width:1px;height:26.3px;background:#e2d2c8"></div>
<div class="a" style="left:539.0px;top:415px;width:1px;height:26.3px;background:#e2d2c8"></div>
<div class="a" style="left:598.5px;top:415px;width:1px;height:26.3px;background:#e2d2c8"></div>
<div class="a" style="left:699.5px;top:415px;width:1px;height:26.3px;background:#e2d2c8"></div>
<div class="a" style="left:758.5px;top:415px;width:1px;height:26.3px;background:#e2d2c8"></div>
<div class="a" style="left:819.0px;top:415px;width:1px;height:26.3px;background:#e2d2c8"></div>
<div class="a" style="left:878.0px;top:415px;width:1px;height:26.3px;background:#e2d2c8"></div>
<div class="a" style="left:926.0px;top:415px;width:1px;height:26.3px;background:#e2d2c8"></div>
<div class="a" style="left:985.5px;top:415px;width:1px;height:26.3px;background:#e2d2c8"></div>
<div class="a" style="left:1045.0px;top:415px;width:1px;height:26.3px;background:#e2d2c8"></div>
<div class="a" style="left:1104.0px;top:415px;width:1px;height:26.3px;background:#e2d2c8"></div>
<div class="a" style="left:1163.5px;top:415px;width:1px;height:26.3px;background:#e2d2c8"></div>
<div class="a" style="left:1209.0px;top:415px;width:1px;height:26.3px;background:#e2d2c8"></div>
<div class="a" style="left:1255.0px;top:415px;width:1px;height:26.3px;background:#e2d2c8"></div>
<div class="t" style="right:900.5px;top:418.15px;height:20px;line-height:20px;font-size:14px;color:#fff;text-align:right;">1</div>
<div class="t" style="left:484px;top:418.15px;height:20px;line-height:20px;font-size:14px;color:#fff;">含水量</div>
<div class="t" style="left:604px;top:418.15px;height:20px;line-height:20px;font-size:14px;color:#fff;">14%</div>
<div class="t" style="right:500.5px;top:418.15px;height:20px;line-height:20px;font-size:14px;color:#fff;text-align:right;">0</div>
<div class="a" style="left:879px;top:417.5px;width:47.5px;height:19px;background:#fff"></div>
<div class="t d" style="right:450.5px;top:418.15px;height:20px;line-height:20px;font-size:14px;color:#111;text-align:right;">0.00</div>
<div class="t d" style="right:900.5px;top:444.45px;height:20px;line-height:20px;font-size:14px;color:#111;text-align:right;">2</div>
<div class="t d" style="left:484px;top:444.45px;height:20px;line-height:20px;font-size:14px;color:#111;">厚度</div>
<div class="t d" style="left:604px;top:444.45px;height:20px;line-height:20px;font-size:14px;color:#111;">0.07±0.005</div>
<div class="t d" style="right:500.5px;top:444.45px;height:20px;line-height:20px;font-size:14px;color:#111;text-align:right;">1</div>
<div class="t d" style="right:450.5px;top:444.45px;height:20px;line-height:20px;font-size:14px;color:#111;text-align:right;">0.00</div>
<div class="t d" style="right:900.5px;top:470.75px;height:20px;line-height:20px;font-size:14px;color:#111;text-align:right;">3</div>
<div class="t d" style="left:484px;top:470.75px;height:20px;line-height:20px;font-size:14px;color:#111;">克重</div>
<div class="t d" style="left:604px;top:470.75px;height:20px;line-height:20px;font-size:14px;color:#111;">标准值±0.5G</div>
<div class="t d" style="right:500.5px;top:470.75px;height:20px;line-height:20px;font-size:14px;color:#111;text-align:right;">1</div>
<div class="t d" style="right:450.5px;top:470.75px;height:20px;line-height:20px;font-size:14px;color:#111;text-align:right;">0.00</div>
<div class="t d" style="right:900.5px;top:497.05px;height:20px;line-height:20px;font-size:14px;color:#111;text-align:right;">4</div>
<div class="t d" style="left:484px;top:497.05px;height:20px;line-height:20px;font-size:14px;color:#111;">耐破力</div>
<div class="t d" style="left:604px;top:497.05px;height:20px;line-height:20px;font-size:14px;color:#111;">18±0.2kg</div>
<div class="t d" style="right:500.5px;top:497.05px;height:20px;line-height:20px;font-size:14px;color:#111;text-align:right;">1</div>
<div class="t d" style="right:450.5px;top:497.05px;height:20px;line-height:20px;font-size:14px;color:#111;text-align:right;">0.00</div>
<div class="t d" style="right:900.5px;top:523.35px;height:20px;line-height:20px;font-size:14px;color:#111;text-align:right;">5</div>
<div class="t d" style="left:484px;top:523.35px;height:20px;line-height:20px;font-size:14px;color:#111;">平整度</div>
<div class="t d" style="left:604px;top:523.35px;height:20px;line-height:20px;font-size:14px;color:#111;">±0.0001</div>
<div class="t d" style="right:500.5px;top:523.35px;height:20px;line-height:20px;font-size:14px;color:#111;text-align:right;">1</div>
<div class="t d" style="right:450.5px;top:523.35px;height:20px;line-height:20px;font-size:14px;color:#111;text-align:right;">0.00</div>
<div class="t d" style="right:900.5px;top:549.65px;height:20px;line-height:20px;font-size:14px;color:#111;text-align:right;">6</div>
<div class="t d" style="left:484px;top:549.65px;height:20px;line-height:20px;font-size:14px;color:#111;">外观</div>
<div class="t d" style="left:604px;top:549.65px;height:20px;line-height:20px;font-size:14px;color:#111;">无毛刺、无起边</div>
<div class="t d" style="right:500.5px;top:549.65px;height:20px;line-height:20px;font-size:14px;color:#111;text-align:right;">1</div>
<div class="t d" style="right:450.5px;top:549.65px;height:20px;line-height:20px;font-size:14px;color:#111;text-align:right;">0.00</div>
<div class="t d" style="right:900.5px;top:575.95px;height:20px;line-height:20px;font-size:14px;color:#111;text-align:right;">7</div>
<div class="t d" style="left:484px;top:575.95px;height:20px;line-height:20px;font-size:14px;color:#111;">温度</div>
<div class="t d" style="left:604px;top:575.95px;height:20px;line-height:20px;font-size:14px;color:#111;">23-26°C</div>
<div class="t d" style="right:500.5px;top:575.95px;height:20px;line-height:20px;font-size:14px;color:#111;text-align:right;">1</div>
<div class="t d" style="right:450.5px;top:575.95px;height:20px;line-height:20px;font-size:14px;color:#111;text-align:right;">0.00</div>
<div class="a" style="left:1332px;top:388px;width:15px;height:343px;background:#f0f0f0"></div>
<svg style="left:1333px;top:391px;" width="13" height="10" viewBox="0 0 13 10"><path d="M2.5 7 L6.5 3 L10.5 7" fill="none" stroke="#444" stroke-width="1.6"/></svg>
<svg style="left:1333px;top:718px;" width="13" height="10" viewBox="0 0 13 10"><path d="M2.5 3 L6.5 7 L10.5 3" fill="none" stroke="#444" stroke-width="1.6"/></svg>
<div class="a" style="left:437px;top:731px;width:895px;height:14px;background:#f0f0f0"></div>
<div class="a" style="left:451.5px;top:731.5px;width:288.5px;height:13px;background:#c9c9c9"></div>
<svg style="left:438px;top:732px;" width="12" height="12" viewBox="0 0 12 12"><path d="M7.5 2.5 L3.5 6 L7.5 9.5" fill="none" stroke="#444" stroke-width="1.6"/></svg>
<svg style="left:1320px;top:732px;" width="12" height="12" viewBox="0 0 12 12"><path d="M4.5 2.5 L8.5 6 L4.5 9.5" fill="none" stroke="#444" stroke-width="1.6"/></svg>
<div class="a" style="left:1332px;top:731px;width:15px;height:14px;background:#fff"></div>
<div class="a" style="left:397px;top:754px;width:964px;height:1px;background:#fdfcfb"></div>
<div class="t d" style="left:438px;top:748.00px;height:19px;line-height:19px;font-size:13px;color:#111;">所有的进料检测记录</div>
<div class="t d" style="left:574px;top:748.00px;height:19px;line-height:19px;font-size:13px;color:#111;">共有</div>
<div class="t d" style="left:613px;top:748.00px;height:19px;line-height:19px;font-size:13px;color:#111;">1</div>
<div class="t d" style="left:630px;top:748.00px;height:19px;line-height:19px;font-size:13px;color:#111;">个</div>
<div class="a" style="left:0px;top:755px;width:396px;height:3px;background:#1e2a36"></div>
<div class="a" style="left:396px;top:755px;width:980px;height:3px;background:#2b2e31"></div>
<div class="a" style="left:973.5px;top:755px;width:34.5px;height:3px;background:#5c5f62"></div>
</body></html>
